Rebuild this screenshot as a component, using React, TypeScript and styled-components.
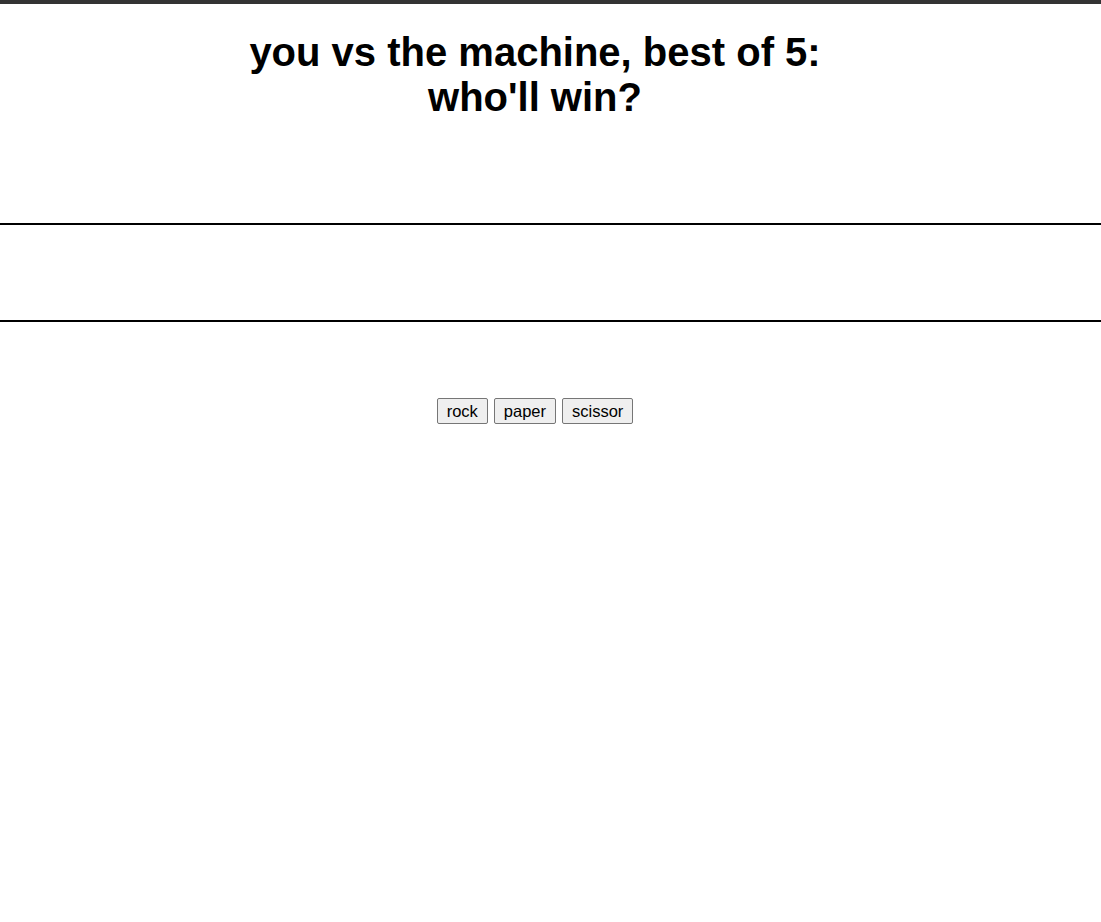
import React from "react";
import styled, { createGlobalStyle } from "styled-components";

const Global = createGlobalStyle`
  html, body { margin: 0; padding: 0; background: #fff; }
  body { font-family: "Liberation Sans", Arial, sans-serif; color: #000; }
`;

const TopBar = styled.div`
  height: 4px;
  background: #333;
`;

const Page = styled.div`
  padding-right: 31px;
`;

const Title = styled.h1`
  margin: 0;
  padding-top: 26px;
  height: 219px;
  box-sizing: border-box;
  text-align: center;
  font-size: 40px;
  line-height: 45px;
  font-weight: bold;
`;

const Board = styled.section`
  border-top: 2px solid #000;
  border-bottom: 2px solid #000;
  height: 95px;
  margin-right: -31px;
`;

const Controls = styled.div`
  display: flex;
  justify-content: center;
  gap: 6px;
  padding-top: 76px;
`;

const Choice = styled.button`
  font-family: "Liberation Sans", Arial, sans-serif;
  font-size: 16.5px;
  height: 26px;
  padding: 1px 9px;
  background: #efefef;
  border: 1px solid #767676;
  border-radius: 2px;
  color: #000;
`;

export default function App() {
  return (
    <>
      <Global />
      <TopBar />
      <Page>
        <Title>
          you vs the machine, best of 5:
          <br />
          who'll win?
        </Title>
        <Board />
        <Controls>
          <Choice>rock</Choice>
          <Choice>paper</Choice>
          <Choice>scissor</Choice>
        </Controls>
      </Page>
    </>
  );
}
